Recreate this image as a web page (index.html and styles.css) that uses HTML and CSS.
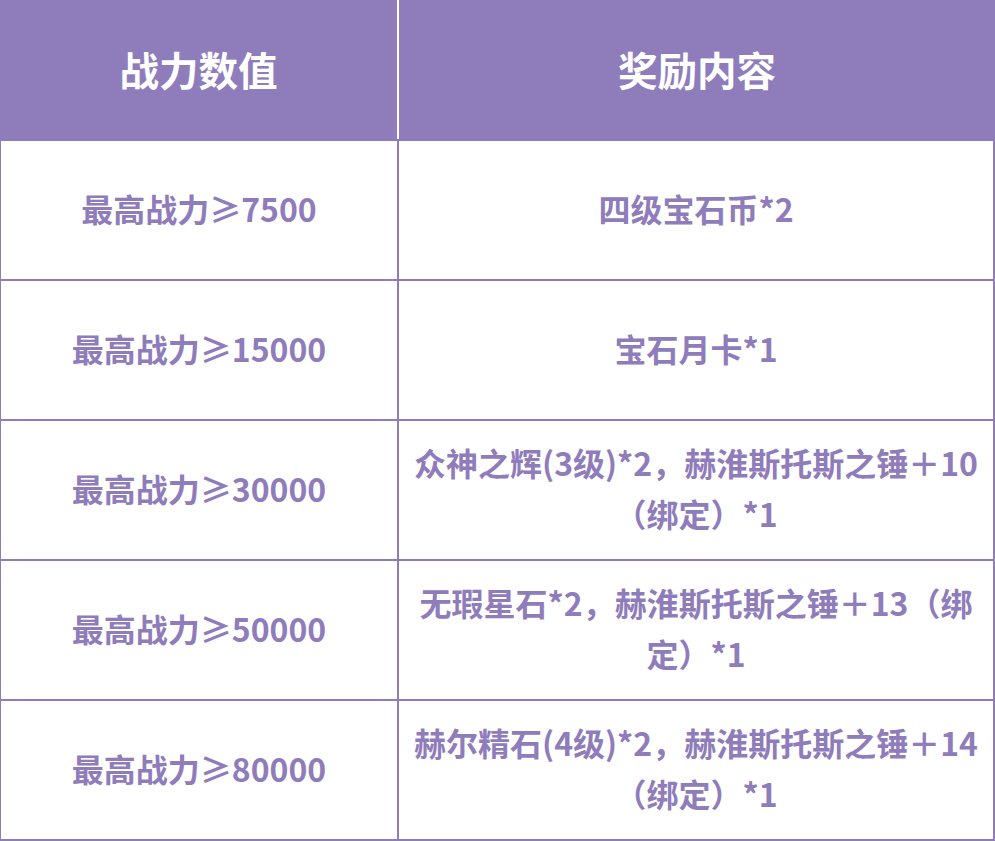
FILE: index.html
```html
<!DOCTYPE html>
<html lang="zh-CN">
<head>
<meta charset="utf-8">
<title>战力奖励</title>
<link rel="stylesheet" href="styles.css">
</head>
<body>
<div class="table">
  <div class="head">
    <div class="hcell hcell-first">战力数值</div>
    <div class="hcell">奖励内容</div>
  </div>
  <div class="body">
    <div class="cell">最高战力≥7500</div>
    <div class="cell">四级宝石币*2</div>
    <div class="cell">最高战力≥15000</div>
    <div class="cell">宝石月卡*1</div>
    <div class="cell">最高战力≥30000</div>
    <div class="cell">众神之辉(3级)*2，赫淮斯托斯之锤＋10（绑定）*1</div>
    <div class="cell">最高战力≥50000</div>
    <div class="cell">无瑕星石*2，赫淮斯托斯之锤＋13（绑定）*1</div>
    <div class="cell">最高战力≥80000</div>
    <div class="cell">赫尔精石(4级)*2，赫淮斯托斯之锤＋14（绑定）*1</div>
  </div>
</div>
</body>
</html>
```

FILE: styles.css
```css
html, body {
  margin: 0;
  padding: 0;
  background: #ffffff;
}

body {
  font-family: "Noto Sans CJK SC", "Noto Sans", sans-serif;
  font-weight: 700;
}

.table {
  width: 995px;
}

.head {
  display: flex;
  height: 139px;
}

.hcell {
  background: #8f7dbb;
  color: #ffffff;
  font-size: 39.5px;
  display: flex;
  align-items: center;
  justify-content: center;
  flex: 1;
  padding-bottom: 2px;
}

.hcell-first {
  flex: 0 0 397px;
  border-right: 2px solid #ffffff;
}

.body {
  display: grid;
  grid-template-columns: 396px 594px;
  grid-auto-rows: 138px;
  gap: 2px;
  padding: 2px 2px 2px 1px;
  background: #8f7dbb;
}

.cell {
  background: #ffffff;
  color: #8f7cbb;
  font-size: 32px;
  line-height: 51px;
  display: flex;
  align-items: center;
  justify-content: center;
  text-align: center;
  padding: 0 15px 4px;
}
```
